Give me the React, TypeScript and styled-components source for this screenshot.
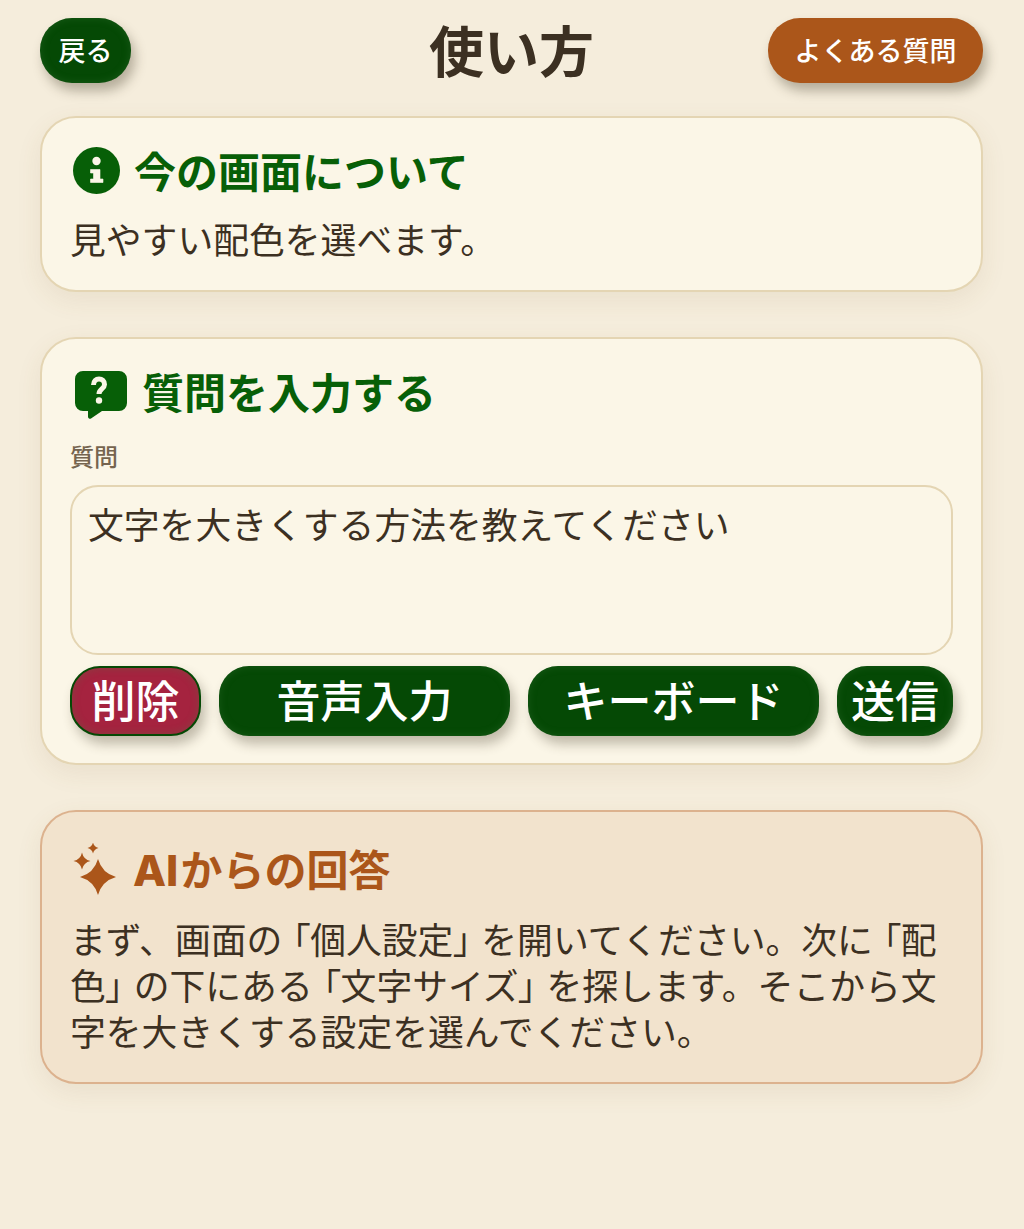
import React from 'react';
import styled, { createGlobalStyle } from 'styled-components';

const GlobalStyle = createGlobalStyle`
  html, body {
    margin: 0;
    padding: 0;
    background: #f5eddc;
  }
  * {
    box-sizing: border-box;
  }
`;

const GREEN = '#075f07';
const BUTTON_GREEN = '#054905';
const GREEN_GLOW = 'inset 0 0 8px rgba(70, 130, 70, 0.3)';
const ORANGE = '#ab561a';
const TEXT = '#3c3022';
const CARD_BG = '#fbf6e7';

const Page = styled.div`
  min-height: 1229px;
  padding: 18px 41px 0 40px;
  background: #f5eddc;
  color: ${TEXT};
  font-family: "Noto Sans CJK JP", "Noto Sans", sans-serif;
`;

const Header = styled.header`
  display: grid;
  grid-template-columns: 1fr auto 1fr;
  align-items: center;
  height: 65px;
  margin-bottom: 33px;
`;

const HeaderButton = styled.button<{ $tone: 'green' | 'orange'; $end?: boolean }>`
  justify-self: ${props => (props.$end ? 'end' : 'start')};
  width: ${props => (props.$end ? '215px' : '91px')};
  height: 65px;
  padding: 0 0 2px;
  border: none;
  border-radius: 32px;
  color: #fff;
  font-family: inherit;
  font-size: 27px;
  font-weight: 500;
  line-height: 1;
  background: ${props => (props.$tone === 'green' ? BUTTON_GREEN : ORANGE)};
  box-shadow: 4px 8px 12px rgba(60, 50, 30, 0.34)${props => (props.$tone === 'green' ? `, ${GREEN_GLOW}` : '')};
`;

const Title = styled.h1`
  align-self: start;
  margin: 0;
  font-size: 55px;
  font-weight: 700;
  line-height: 61px;
  color: ${TEXT};
`;

const Cards = styled.main`
  display: flex;
  flex-direction: column;
  gap: 45px;
`;

const Card = styled.section<{ $answer?: boolean; $tight?: boolean }>`
  padding: ${props => (props.$answer ? '30px' : '26px')} 28px ${props => (props.$tight ? '27px' : '29px')} 28px;
  border: 2px solid ${props => (props.$answer ? '#dcb28e' : '#e4d5b3')};
  border-radius: 36px;
  background: ${props => (props.$answer ? '#f2e3cd' : CARD_BG)};
  box-shadow: 0 8px 26px rgba(120, 90, 40, 0.09);
`;

const CardHeading = styled.h2<{ $answer?: boolean; $gap: number }>`
  display: flex;
  align-items: center;
  gap: ${props => props.$gap}px;
  margin: 0;
  font-size: 42px;
  font-weight: 700;
  line-height: 52px;
  color: ${props => (props.$answer ? ORANGE : GREEN)};

  svg {
    flex: none;
  }
`;

const LatinMark = styled.span`
  margin-right: 2px;
  font-family: "Inter", "Liberation Sans", sans-serif;
  font-size: 43px;
  font-weight: 800;
`;

const BodyText = styled.p`
  margin: 19px 0 0;
  font-size: 35.8px;
  line-height: 46px;
  color: ${TEXT};
`;

const Bracket = styled.span<{ $open?: boolean }>`
  font-feature-settings: "palt";
  padding: ${props => (props.$open ? '0 0 0 10px' : '0 10px 0 0')};
`;

const Label = styled.label`
  display: block;
  margin-top: 22px;
  font-size: 24px;
  font-weight: 500;
  line-height: 34px;
  color: #75644f;
`;

const Question = styled.textarea`
  display: block;
  width: 100%;
  height: 170px;
  margin-top: 12px;
  padding: 13px 16px;
  border: 2px solid #e4d5b3;
  border-radius: 28px;
  background: ${CARD_BG};
  color: ${TEXT};
  font-family: inherit;
  font-size: 35.8px;
  line-height: 46px;
  resize: none;
  outline: none;
`;

const Actions = styled.div`
  display: grid;
  grid-template-columns: 131px 1fr 1fr 116px;
  gap: 18px;
  margin-top: 11px;
`;

const ActionButton = styled.button<{ $danger?: boolean }>`
  height: 70px;
  padding: 0 0 5px;
  border: ${props => (props.$danger ? `2px solid ${BUTTON_GREEN}` : 'none')};
  border-radius: 30px;
  color: #fff;
  font-family: inherit;
  font-size: 44px;
  font-weight: 500;
  line-height: 1;
  background: ${props => (props.$danger ? '#a5233f' : BUTTON_GREEN)};
  box-shadow: 4px 8px 12px rgba(60, 50, 30, 0.3), ${GREEN_GLOW};
`;

const InfoSvg = styled.svg`
  margin-left: 3px;
`;

const InfoIcon = () => (
  <InfoSvg width="47" height="47" viewBox="0 0 47 47">
    <circle cx="23.500" cy="23.500" r="23.500" fill={GREEN} />
    <circle cx="23.500" cy="14" r="4.200" fill={CARD_BG} />
    <path
      d="M17.500 22.500h9.500v9.500h3v3.500h-12.500v-3.500h3v-6h-3z"
      fill={CARD_BG}
      stroke={CARD_BG}
      strokeWidth="0.600"
      strokeLinejoin="round"
    />
  </InfoSvg>
);

const QuestionSvg = styled.svg`
  margin: 6px 0 -2px 5px;
`;

const QuestionIcon = () => (
  <QuestionSvg width="52" height="48" viewBox="1 1 52 48">
    <path
      d="M9 1h36a8 8 0 0 1 8 8v24a8 8 0 0 1-8 8H28L17 48.500a2 2 0 0 1-3-1.800V41H9a8 8 0 0 1-8-8V9a8 8 0 0 1 8-8z"
      fill={GREEN}
    />
    <path
      d="M19.500 15c0-4 2.500-6 5.500-6s5.500 2 5.500 5.500c0 4.500-5.500 4.500-5.500 9.500"
      fill="none"
      stroke={CARD_BG}
      strokeWidth="5"
    />
    <circle cx="25" cy="30.500" r="3.200" fill={CARD_BG} />
  </QuestionSvg>
);

// four pointed star, k is how far the waist sits from the centre
const star = (cx: number, cy: number, r: number, k: number) =>
  `M${cx} ${cy - r}Q${cx + k} ${cy - k} ${cx + r} ${cy}Q${cx + k} ${cy + k} ${cx} ${cy + r}` +
  `Q${cx - k} ${cy + k} ${cx - r} ${cy}Q${cx - k} ${cy - k} ${cx} ${cy - r}z`;

const SparkleSvg = styled.svg`
  margin-left: 3px;
`;

const SparkleIcon = () => (
  <SparkleSvg width="46" height="52" viewBox="0 0 46 52">
    <g fill={ORANGE}>
      <path d={star(25, 34, 18, 4)} />
      <path d={star(9, 18, 8.500, 1.500)} />
      <path d={star(20, 5, 5.500, 1)} />
    </g>
  </SparkleSvg>
);

const App: React.FC = () => {
  return (
    <>
      <GlobalStyle />
      <Page>
        <Header>
          <HeaderButton $tone="green">戻る</HeaderButton>
          <Title>使い方</Title>
          <HeaderButton $tone="orange" $end>よくある質問</HeaderButton>
        </Header>

        <Cards>
          <Card>
            <CardHeading $gap={14}>
              <InfoIcon />
              今の画面について
            </CardHeading>
            <BodyText>見やすい配色を選べます。</BodyText>
          </Card>

          <Card $tight>
            <CardHeading $gap={15}>
              <QuestionIcon />
              質問を入力する
            </CardHeading>
            <Label htmlFor="question">質問</Label>
            <Question id="question" defaultValue="文字を大きくする方法を教えてください" />
            <Actions>
              <ActionButton $danger>削除</ActionButton>
              <ActionButton>音声入力</ActionButton>
              <ActionButton>キーボード</ActionButton>
              <ActionButton>送信</ActionButton>
            </Actions>
          </Card>

          <Card $answer>
            <CardHeading $answer $gap={14}>
              <SparkleIcon />
              <span><LatinMark>AI</LatinMark>からの回答</span>
            </CardHeading>
            <BodyText>
              まず、画面の<Bracket $open>「</Bracket>個人設定<Bracket>」</Bracket>を開いてください。次に<Bracket $open>「</Bracket>配色<Bracket>」</Bracket>の下にある<Bracket $open>「</Bracket>文字サイズ<Bracket>」</Bracket>を探します。そこから文字を大きくする設定を選んでください。
            </BodyText>
          </Card>
        </Cards>
      </Page>
    </>
  );
};

export default App;
